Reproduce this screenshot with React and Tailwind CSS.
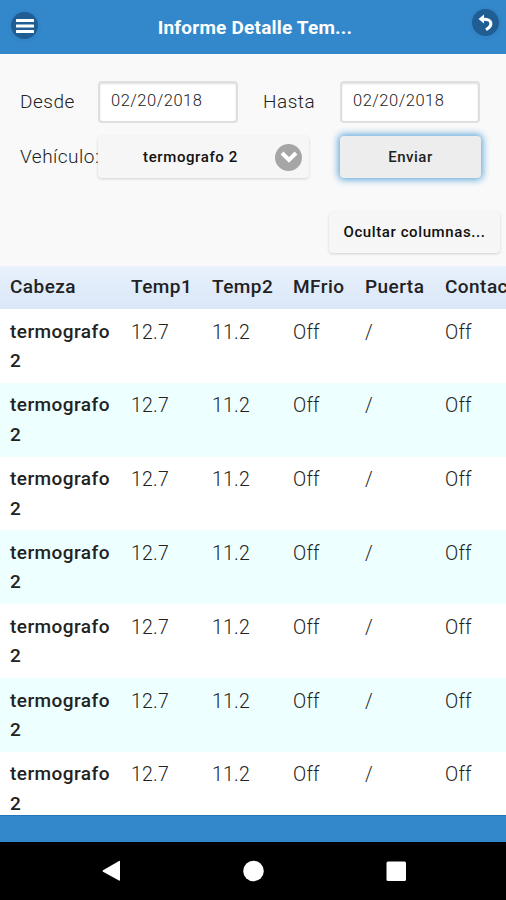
const rows = Array.from({ length: 7 }, (_, i) => i);

function RoundIcon({ children }) {
  return (
    <span className="flex size-[27px] items-center justify-center rounded-full bg-[#205d92] shadow-[0_1px_0_3px_rgba(45,125,190,0.35)]">
      {children}
    </span>
  );
}

function DateInput({ value }) {
  return (
    <div className="h-[42px] w-[140px] shrink-0 rounded-[4px] border-2 border-[#dfdfdf] bg-white pl-[11px] text-[16.5px] leading-[36px] font-light tracking-[0.5px] text-[#222] shadow-[inset_0_1px_2px_rgba(0,0,0,0.12)]">
      {value}
    </div>
  );
}

const grid = "grid grid-cols-[121px_81px_81px_72px_80px_90px] pl-[10px]";

export default function App() {
  return (
    <div className="flex h-[900px] w-[506px] flex-col overflow-hidden bg-[#f9f9f9] font-['Roboto',sans-serif] text-[#222]">
      <header className="flex h-[54px] shrink-0 items-start justify-between bg-[#3388cc] pr-[7px] pl-[11px]">
        <div className="pt-[12px]">
          <RoundIcon>
            <svg width="18" height="14" viewBox="0 0 18 14" fill="#fff">
              <rect width="18" height="3" rx="0.5" />
              <rect y="5.5" width="18" height="3" rx="0.5" />
              <rect y="11" width="18" height="3" rx="0.5" />
            </svg>
          </RoundIcon>
        </div>
        <h1 className="pt-[3px] text-[19px] leading-[50px] font-bold tracking-[0.2px] whitespace-nowrap text-white">Informe Detalle Tem...</h1>
        <div className="pt-[9px]">
          <RoundIcon>
            <svg width="17" height="18" viewBox="0 0 17 18" fill="none">
              <path d="M7 0.500v9L1.500 5z" fill="#fff" />
              <path d="M5.500 5.200c10.500-.5 10.500 6.300 3.500 10.500" stroke="#fff" strokeWidth="3" />
            </svg>
          </RoundIcon>
        </div>
      </header>

      <section className="h-[212px] shrink-0">
        <div className="flex h-[70px] items-end pb-[1px] pl-[20px]">
          <label className="w-[78px] text-[19px] leading-[42px] font-light tracking-[0.5px]">Desde</label>
          <DateInput value="02/20/2018" />
          <label className="ml-[25px] w-[77px] text-[19px] leading-[42px] font-light tracking-[0.5px]">Hasta</label>
          <DateInput value="02/20/2018" />
        </div>
        <div className="flex pt-[12px] pl-[20px]">
          <label className="w-[78px] overflow-hidden text-[19px] leading-[41px] font-light tracking-[0.5px] whitespace-nowrap">Vehículo:</label>
          <div className="flex h-[42px] w-[211px] items-center rounded-[4px] bg-[#f6f6f6] pr-[7px] pl-[8px] shadow-[0_1px_3px_rgba(0,0,0,0.16)]">
            <span className="flex-1 text-center text-[15px] font-medium tracking-[0.6px] text-[#111]">termografo 2</span>
            <span className="flex size-[27px] items-center justify-center rounded-full bg-[#a6a6a6]">
              <svg width="18" height="12" viewBox="0 0 18 12" fill="none">
                <path d="M2 2l7 7 7-7" stroke="#fff" strokeWidth="4" />
              </svg>
            </span>
          </div>
          <button className="ml-[31px] h-[42px] w-[141px] rounded-[4px] bg-[#ededed] text-[15px] leading-[40px] font-medium tracking-[0.5px] shadow-[0_0_7px_2px_#66aadd]">Enviar</button>
        </div>
        <div className="flex justify-end pt-[34px] pr-[6px]">
          <button className="h-[41px] w-[171px] rounded-[4px] bg-[#f6f6f6] text-[15px] leading-[37px] font-medium tracking-[0.6px] text-[#111] shadow-[0_1px_3px_rgba(0,0,0,0.16)]">Ocultar columnas...</button>
        </div>
      </section>

      <main className="h-[549px] shrink-0 overflow-hidden bg-white">
        <div className={`${grid} h-[43px] bg-linear-to-b from-[#e8f1fc] to-[#dbe7f8] text-[19px] leading-[41px] font-medium tracking-[0.45px] text-[#222]`}>
          <span>Cabeza</span>
          <span>Temp1</span>
          <span>Temp2</span>
          <span>MFrio</span>
          <span>Puerta</span>
          <span>Contacto</span>
        </div>
        {rows.map((i) => (
          <div key={i} className={`${grid} h-[73.8px] pt-[7.6px] text-[19.5px] leading-[31px] font-light tracking-[0.2px] ${i % 2 ? "bg-[#eeffff]" : "bg-white"}`}>
            <span className="w-[105px] text-[19px] leading-[29.5px] font-medium tracking-[0.45px] text-[#222]">termografo 2</span>
            <span>12.7</span>
            <span>11.2</span>
            <span>Off</span>
            <span>/</span>
            <span>Off</span>
          </div>
        ))}
      </main>

      <div className="h-[27px] shrink-0 border-t border-[#2277bb] bg-[#3388cc]" />
      <nav className="h-[58px] shrink-0 bg-black">
        <svg width="506" height="58" viewBox="0 0 506 58" fill="#fff">
          <path d="M103 28.2L119 19q1-.5 1 .5V38q0 1-1 .5L103 29.7q-1-.8 0-1.5z" />
          <circle cx="253.500" cy="29" r="10.300" />
          <rect x="386.500" y="19.500" width="19.500" height="19.500" rx="1.500" />
        </svg>
      </nav>
    </div>
  );
}
